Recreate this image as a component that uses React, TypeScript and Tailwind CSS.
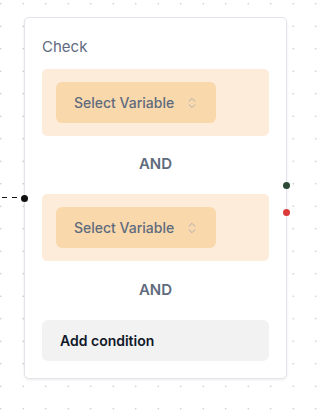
import { ChevronsUpDown } from 'lucide-react'

function VariableBox() {
  return (
    <div className="flex h-[67px] items-start rounded-[5px] bg-[#feecdb] pl-[14px] pt-[13px]">
      <button className="flex h-[41px] w-[160px] items-center gap-[11px] rounded-[6px] bg-[#f9d8ac] pl-[18px] text-[14px] font-medium text-[#5f6b7d]">
        <span>Select Variable</span>
        <ChevronsUpDown className="h-[14px] w-[14px] text-[#a3a8b1]" strokeWidth={1.5} />
      </button>
    </div>
  )
}

function AndLabel() {
  return (
    <div className="flex h-[58px] items-center justify-center pb-[2px] text-[15px] font-semibold text-[#5f6b7d]">
      AND
    </div>
  )
}

export default function App() {
  return (
    <div
      className="relative flex h-[415px] w-[321px] items-start overflow-hidden bg-white bg-[radial-gradient(circle,#b7b7bd_0.8px,transparent_1px)] bg-[size:22.5px_22.5px] bg-[position:-10.5px_-7.5px] pl-[24px] pt-[17px]"
      style={{ fontFamily: 'Inter, "Noto Sans", sans-serif' }}
    >
      {/* incoming edge */}
      <svg className="absolute left-0 top-[196px]" width="22" height="3">
        <line x1="0" y1="1.5" x2="22" y2="1.5" stroke="#111" strokeWidth="1" strokeDasharray="5 5" strokeDashoffset="-2" />
      </svg>

      <div className="relative flex w-[263px] flex-col rounded-[5px] border border-[#e2e4e9] bg-white px-[17px] pb-[17px] pt-[19px] shadow-[0_1px_3px_rgba(0,0,0,0.08)]">
        <div className="mb-[12px] h-[20px] text-[15px] leading-[20px] text-[#5f6b7d]">Check</div>
        <VariableBox />
        <AndLabel />
        <VariableBox />
        <div className="h-[59px] pt-[1px]">
          <AndLabel />
        </div>
        <button className="flex h-[41px] items-center rounded-[6px] bg-[#f2f2f3] pl-[18px] text-[14px] font-semibold text-[#111827]">
          Add condition
        </button>

        {/* handles */}
        <span className="absolute left-[-4px] top-[177px] h-[7px] w-[7px] rounded-full bg-[#111]" />
        <span className="absolute right-[-4px] top-[164px] h-[7px] w-[7px] rounded-full bg-[#2c4a35]" />
        <span className="absolute right-[-4px] top-[191px] h-[7px] w-[7px] rounded-full bg-[#dc3a3a]" />
      </div>
    </div>
  )
}
